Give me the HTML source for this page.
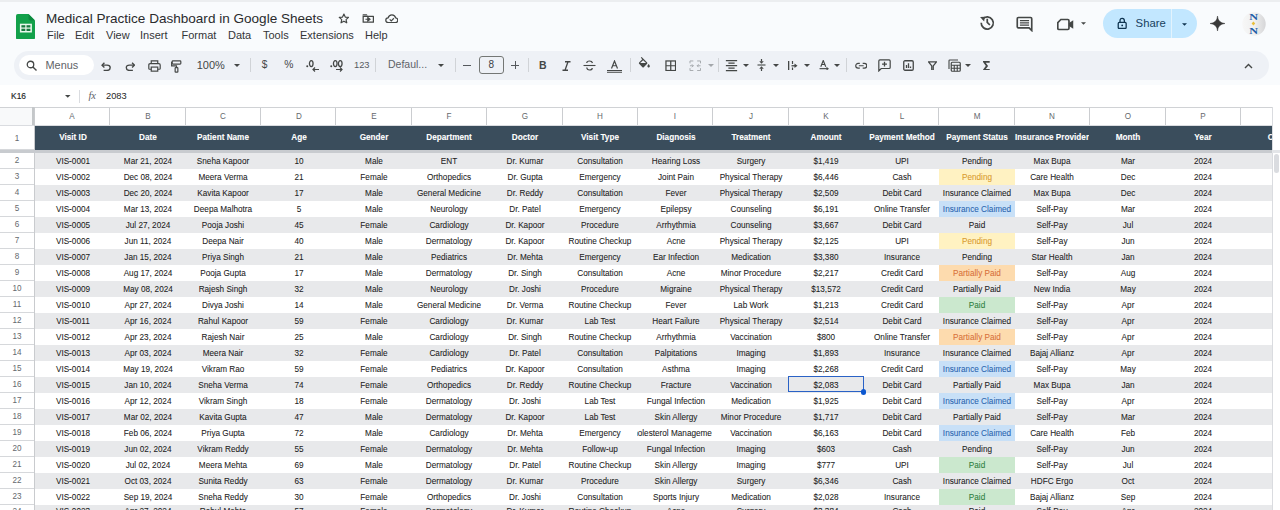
<!DOCTYPE html>
<html><head><meta charset="utf-8"><title>Medical Practice Dashboard in Google Sheets</title>
<style>
*{margin:0;padding:0;box-sizing:border-box}
html,body{width:1280px;height:510px;overflow:hidden;background:#fff;font-family:"Liberation Sans",sans-serif}
.a{position:absolute}
.t{position:absolute;white-space:nowrap;line-height:1}
.ic{position:absolute;display:block}
.cell{position:absolute;overflow:hidden;height:16px}
.cell span{position:absolute;left:calc(50% + 0.8px);transform:translateX(-50%) scaleX(0.91);white-space:nowrap;font-size:9px;line-height:16px;top:0.1px;color:#1c1c1c;-webkit-text-stroke:0.07px currentColor}
.hd span{color:#fff;font-weight:bold;line-height:24px;top:-0.2px;-webkit-text-stroke:0.1px #fff}
.ch{position:absolute;top:107px;height:18px;overflow:hidden}
.ch span{position:absolute;left:calc(50% + 0.6px);transform:translateX(-50%) scaleX(0.9);white-space:nowrap;font-size:9px;line-height:18px;top:0.2px;color:#65696d}
.rh{position:absolute;left:0;width:34px;border-bottom:1px solid #d6d8db}
.rh span{position:absolute;left:calc(50% + 0.3px);transform:translateX(-50%) scaleX(0.9);white-space:nowrap;font-size:9px;line-height:16px;top:0.3px;color:#65696d}
#grid{position:absolute;left:0;top:107px;width:1272px;height:403px;overflow:hidden;background:#fff}
#grid .g{position:absolute;left:0;top:-107px;width:1280px;height:510px}
</style></head><body>

<div class="a" style="left:0;top:0;width:1280px;height:107px;background:#f9fbfd"></div>
<div class="a" style="left:0;top:0;width:1280px;height:1.5px;background:#eceef0"></div>
<svg class="ic" style="left:16px;top:13.5px" width="19" height="25.6" viewBox="0 0 19 25.6">
<path d="M1.8 0H12.5L19 6.5V23.8Q19 25.6 17.2 25.6H1.8Q0 25.6 0 23.8V1.8Q0 0 1.8 0Z" fill="#12a04a"/>
<path d="M12.5 0L19 6.5H14.3Q12.5 6.5 12.5 4.7Z" fill="#0c8a3e"/>
<rect x="3.9" y="9.7" width="12" height="8.8" fill="#e9f8ec"/>
<rect x="5.4" y="11.2" width="3.9" height="2.3" fill="#17793f"/><rect x="10.5" y="11.2" width="3.9" height="2.3" fill="#17793f"/>
<rect x="5.4" y="14.7" width="3.9" height="2.3" fill="#17793f"/><rect x="10.5" y="14.7" width="3.9" height="2.3" fill="#17793f"/>
</svg>
<div class="t" style="left:46px;top:11.8px;font-size:13.55px;color:#2a2b2d">Medical Practice Dashboard in Google Sheets</div>
<svg class="ic" style="left:337.5px;top:12.8px" width="11.8" height="11.5" viewBox="0 0 24 23.4"><path d="M12 2.2l2.75 6.1 6.65.65-5 4.45 1.45 6.55L12 16.6l-5.85 3.35 1.45-6.55-5-4.45 6.65-.65z" fill="none" stroke="#444746" stroke-width="2.4" stroke-linejoin="round"/></svg>
<svg class="ic" style="left:361.5px;top:14.3px" width="12.6" height="9.4" viewBox="0 0 24 18"><path d="M2.2 3.2V15.8H21.8V4.6H2.2" fill="none" stroke="#444746" stroke-width="2.4" stroke-linejoin="round"/><path d="M1 1.5Q1 0.5 2 0.5H9L11 3H1Z" fill="#444746"/><path d="M6.5 10.2H12M11 6.5L15.5 10.2L11 13.9Z" fill="#444746" stroke="#444746" stroke-width="2"/></svg>
<svg class="ic" style="left:384.6px;top:14px" width="13.6" height="9.4" viewBox="0 0 26 18"><path d="M6.5 16.5Q1.5 16.5 1.5 12Q1.5 8 5.8 7.6Q7.5 1.5 13.2 1.5Q19 1.5 20.3 7.6Q24.5 8 24.5 12Q24.5 16.5 20 16.5Z" fill="none" stroke="#444746" stroke-width="2.4" stroke-linejoin="round"/><path d="M9 10.2l3 3 5-5" fill="none" stroke="#444746" stroke-width="2.2"/></svg>
<div class="t" style="left:47px;top:29.7px;font-size:11px;color:#333538">File</div>
<div class="t" style="left:75px;top:29.7px;font-size:11px;color:#333538">Edit</div>
<div class="t" style="left:106px;top:29.7px;font-size:11px;color:#333538">View</div>
<div class="t" style="left:140px;top:29.7px;font-size:11px;color:#333538">Insert</div>
<div class="t" style="left:181.5px;top:29.7px;font-size:11px;color:#333538">Format</div>
<div class="t" style="left:228px;top:29.7px;font-size:11px;color:#333538">Data</div>
<div class="t" style="left:263px;top:29.7px;font-size:11px;color:#333538">Tools</div>
<div class="t" style="left:300px;top:29.7px;font-size:11px;color:#333538">Extensions</div>
<div class="t" style="left:365px;top:29.7px;font-size:11px;color:#333538">Help</div>
<svg class="ic" style="left:978.8px;top:14.3px" width="16.5" height="16.5" viewBox="0 0 24 24"><path d="M5.2 7.5A8.8 8.8 0 1 1 3.2 12.8" fill="none" stroke="#444746" stroke-width="2.5"/><path d="M1.5 4.5L8.5 4L7.5 11Z" fill="#444746"/><path d="M12 7V12.3L15.8 16" fill="none" stroke="#444746" stroke-width="2.5"/></svg>
<svg class="ic" style="left:1016px;top:16px" width="17" height="16" viewBox="0 0 22 21"><path d="M3 2H19Q20.5 2 20.5 3.5V19L17 15.5H3Q1.5 15.5 1.5 14V3.5Q1.5 2 3 2Z" fill="none" stroke="#444746" stroke-width="2.2"/><path d="M5 6h12M5 9h12M5 12h12" stroke="#444746" stroke-width="1.6"/></svg>
<svg class="ic" style="left:1057px;top:18px" width="17" height="13" viewBox="0 0 22 16"><path d="M5 1.5H14Q15.5 1.5 15.5 3V13Q15.5 14.5 14 14.5H2.5Q1 14.5 1 13V5.5Z" fill="none" stroke="#444746" stroke-width="2.2"/><path d="M15.5 6L21 2.5V13.5L15.5 10Z" fill="#444746"/></svg>
<svg class="ic" style="left:1081px;top:22px" width="5" height="3" viewBox="0 0 10 5"><path d="M0 0h10L5 5z" fill="#444746"/></svg>
<div class="a" style="left:1103px;top:8.7px;width:94px;height:29.6px;border-radius:15px;background:#c2e7ff"></div>
<div class="a" style="left:1171.3px;top:8.7px;width:1px;height:29.6px;background:#e3f3fd"></div>
<svg class="ic" style="left:1117.3px;top:16.8px" width="10.4" height="12.4" viewBox="0 0 11 13"><path d="M3.2 5.6V3.9Q3.2 1.3 5.5 1.3Q7.8 1.3 7.8 3.9V5.6" fill="none" stroke="#0f3450" stroke-width="1.35"/><rect x="1.3" y="5.6" width="8.4" height="6.5" rx="1.1" fill="none" stroke="#0f3450" stroke-width="1.35"/><circle cx="5.5" cy="8.85" r="0.95" fill="#0f3450"/></svg>
<div class="t" style="left:1135.6px;top:18.4px;font-size:11.3px;color:#173f5e">Share</div>
<svg class="ic" style="left:1182.2px;top:23.3px" width="5" height="2.8" viewBox="0 0 10 5"><path d="M0 0h10L5 5z" fill="#0f3450"/></svg>
<svg class="ic" style="left:1210.3px;top:16.1px" width="15" height="15" viewBox="0 0 24 24"><path d="M12 0Q12.8 11.2 24 12Q12.8 12.8 12 24Q11.2 12.8 0 12Q11.2 11.2 12 0Z" fill="#3a3a3a" stroke="#3a3a3a" stroke-width="0.8" stroke-linejoin="round"/></svg>
<svg class="ic" style="left:1242px;top:12.2px" width="24" height="24" viewBox="0 0 24 24"><defs><linearGradient id="av" x1="0" y1="0" x2="1" y2="0"><stop offset="0" stop-color="#f7f7f7"/><stop offset="0.5" stop-color="#f0f0f0"/><stop offset="1" stop-color="#d6d6d8"/></linearGradient></defs><circle cx="12" cy="12" r="11.7" fill="url(#av)"/>
<g transform="translate(7.2,8.2) scale(1.45,1)"><text x="0" y="0" font-family="Liberation Serif" font-weight="bold" font-size="8.4" fill="#1f5ca8">N</text></g>
<path d="M11.4 9.6L13.2 11.6L11.4 13.6L9.6 11.6Z" fill="#e9bf3a"/>
<g transform="translate(7.2,22) scale(1.45,1)"><text x="0" y="0" font-family="Liberation Serif" font-weight="bold" font-size="8.4" fill="#1f5ca8">N</text></g></svg>
<div class="a" style="left:14px;top:50.5px;width:1255px;height:29px;border-radius:14.5px;background:#eef1f6"></div>
<div class="a" style="left:18.7px;top:54.7px;width:75px;height:20px;border-radius:10px;background:#fff"></div>
<svg class="ic" style="left:26px;top:60px" width="12" height="11" viewBox="0 0 24 22"><circle cx="9" cy="9" r="6.5" fill="none" stroke="#444746" stroke-width="2.6"/><path d="M13.8 13.8L21 21" stroke="#444746" stroke-width="2.8"/></svg>
<div class="t" style="left:45.5px;top:60.2px;font-size:10.9px;color:#5f6368">Menus</div>
<svg class="ic" style="left:101.2px;top:61.5px" width="10.5" height="9.5" viewBox="0 0 20 18"><path d="M6.5 1.5L2 6l4.5 4.5" fill="none" stroke="#444746" stroke-width="2.6"/><path d="M2.5 6H11.5Q17.5 6 17.5 11Q17.5 16 11.5 16H5" fill="none" stroke="#444746" stroke-width="2.6"/></svg>
<svg class="ic" style="left:124.8px;top:61.5px" width="10.5" height="9.5" viewBox="0 0 20 18"><path d="M13.5 1.5L18 6l-4.5 4.5" fill="none" stroke="#444746" stroke-width="2.6"/><path d="M17.5 6H8.5Q2.5 6 2.5 11Q2.5 16 8.5 16H15" fill="none" stroke="#444746" stroke-width="2.6"/></svg>
<svg class="ic" style="left:147.5px;top:59.5px" width="13" height="12" viewBox="0 0 24 22"><path d="M6 6V1.5H18V6" fill="none" stroke="#444746" stroke-width="2.2"/><path d="M6 17H3Q1.5 17 1.5 15.5V9Q1.5 6.5 4 6.5H20Q22.5 6.5 22.5 9V15.5Q22.5 17 21 17H18" fill="none" stroke="#444746" stroke-width="2.2"/><rect x="6" y="13" width="12" height="7.5" fill="none" stroke="#444746" stroke-width="2.2"/></svg>
<svg class="ic" style="left:171px;top:59.5px" width="11" height="13" viewBox="0 0 20 24"><rect x="2" y="1.5" width="16" height="6" rx="1.5" fill="none" stroke="#444746" stroke-width="2.2"/><path d="M2 4.5H1V11H10V14" fill="none" stroke="#444746" stroke-width="2.2"/><rect x="7.5" y="14" width="5" height="8.5" rx="1" fill="none" stroke="#444746" stroke-width="2.2"/></svg>
<div class="t" style="left:196.7px;top:60.4px;font-size:11px;color:#444746">100%</div>
<svg class="ic" style="left:234px;top:63.5px" width="6" height="3" viewBox="0 0 10 5"><path d="M0 0h10L5 5z" fill="#444746"/></svg>
<div class="a" style="left:250px;top:58px;width:1px;height:14px;background:#d0d3d7"></div>
<div class="t" style="left:261.8px;top:59.6px;font-size:10.2px;color:#444746">$</div>
<div class="t" style="left:284.2px;top:59.8px;font-size:10.3px;color:#444746">%</div>
<svg class="ic" style="left:305.5px;top:59px" width="14" height="13" viewBox="0 0 28 26"><circle cx="2.5" cy="14.5" r="2" fill="#444746"/><ellipse cx="10.5" cy="9.2" rx="3.6" ry="6" fill="none" stroke="#444746" stroke-width="2.6"/><path d="M26 21H14M18 17l-4 4 4 4" fill="none" stroke="#444746" stroke-width="2.4"/></svg>
<svg class="ic" style="left:329.5px;top:59px" width="15" height="13" viewBox="0 0 30 26"><circle cx="2.5" cy="14.5" r="2" fill="#444746"/><ellipse cx="10.5" cy="9.2" rx="3.6" ry="6" fill="none" stroke="#444746" stroke-width="2.6"/><ellipse cx="20.5" cy="9.2" rx="3.6" ry="6" fill="none" stroke="#444746" stroke-width="2.6"/><path d="M12 21H24M20 17l4 4-4 4" fill="none" stroke="#444746" stroke-width="2.4"/></svg>
<div class="t" style="left:354px;top:61px;font-size:9.3px;color:#555a5e">123</div>
<div class="a" style="left:375px;top:58px;width:1px;height:14px;background:#d0d3d7"></div>
<div class="t" style="left:388px;top:59px;font-size:10.5px;color:#5f6368">Defaul...</div>
<svg class="ic" style="left:438px;top:63.5px" width="6" height="3" viewBox="0 0 10 5"><path d="M0 0h10L5 5z" fill="#444746"/></svg>
<div class="a" style="left:455px;top:58px;width:1px;height:14px;background:#d0d3d7"></div>
<div class="a" style="left:463.4px;top:64.5px;width:7.6px;height:1.3px;background:#55595d"></div>
<div class="a" style="left:479px;top:56.2px;width:25px;height:18px;border:1px solid #747775;border-radius:3px"></div>
<div class="t" style="left:488.6px;top:60.2px;font-size:10px;color:#3c4043">8</div>
<div class="a" style="left:511.4px;top:64.5px;width:7.6px;height:1.3px;background:#55595d"></div>
<div class="a" style="left:514.6px;top:61.3px;width:1.3px;height:7.6px;background:#55595d"></div>
<div class="a" style="left:527.6px;top:58px;width:1px;height:14px;background:#d0d3d7"></div>
<div class="t" style="left:539px;top:60px;font-size:10.5px;font-weight:bold;color:#444746">B</div>
<svg class="ic" style="left:561.5px;top:60.5px" width="9" height="10" viewBox="0 0 18 20"><path d="M6 1.5h11M1 18.5h11M12 1.5L6 18.5" fill="none" stroke="#444746" stroke-width="2.6"/></svg>
<svg class="ic" style="left:583px;top:59.5px" width="13" height="11" viewBox="0 0 26 22"><path d="M1 11H25" stroke="#444746" stroke-width="2.2"/><path d="M19 6Q18 2 13 2Q7.5 2 7.5 6" fill="none" stroke="#444746" stroke-width="2.4"/><path d="M7.5 15Q8 20 13 20Q18.5 20 18.5 16" fill="none" stroke="#444746" stroke-width="2.4"/></svg>
<svg class="ic" style="left:606px;top:59.5px" width="17" height="13" viewBox="0 0 34 26"><path d="M11 17L17 2L23 17M13.5 11.5h7" fill="none" stroke="#444746" stroke-width="2.4"/><path d="M2 21H32M2 24.5H32" stroke="#444746" stroke-width="2"/></svg>
<div class="a" style="left:629.6px;top:58px;width:1px;height:14px;background:#d0d3d7"></div>
<svg class="ic" style="left:637.2px;top:56.8px" width="14.7" height="14.7" viewBox="0 0 24 24"><path d="M16.56 8.94L7.62 0 6.21 1.41l2.38 2.38-5.15 5.15c-.59.59-.59 1.54 0 2.12l5.5 5.5c.29.29.68.44 1.06.44s.77-.15 1.06-.44l5.5-5.5c.59-.58.59-1.53 0-2.12zM5.21 10L10 5.21 14.79 10H5.21zM19 11.5s-2 2.17-2 3.5c0 1.1.9 2 2 2s2-.9 2-2c0-1.33-2-3.5-2-3.5z" fill="#444746"/></svg>
<svg class="ic" style="left:664.5px;top:59.5px" width="11.5" height="11.5" viewBox="0 0 24 24"><rect x="2" y="2" width="20" height="20" fill="none" stroke="#444746" stroke-width="2.6"/><path d="M12 2V22M2 12H22" stroke="#444746" stroke-width="2.6"/></svg>
<svg class="ic" style="left:688.5px;top:59.5px" width="12.5" height="11.5" viewBox="0 0 26 24"><path d="M2 7V2H9M17 2H24V7M2 17V22H9M17 22H24V17M2 12H9M17 12H24M6 9l3 3-3 3M20 9l-3 3 3 3" fill="none" stroke="#a3a7ab" stroke-width="2"/></svg>
<svg class="ic" style="left:707.5px;top:63.5px" width="6" height="3" viewBox="0 0 10 5"><path d="M0 0h10L5 5z" fill="#a3a7ab"/></svg>
<div class="a" style="left:718px;top:58px;width:1px;height:14px;background:#d0d3d7"></div>
<svg class="ic" style="left:724.1px;top:57.9px" width="15" height="15" viewBox="0 0 24 24"><path d="M7 15v2h10v-2H7zm-4 6h18v-2H3v2zm0-8h18v-2H3v2zm4-6v2h10V7H7zM3 3v2h18V3H3z" fill="#444746"/></svg>
<svg class="ic" style="left:742.5px;top:63.5px" width="6" height="3" viewBox="0 0 10 5"><path d="M0 0h10L5 5z" fill="#444746"/></svg>
<svg class="ic" style="left:757.2px;top:59.3px" width="9" height="12" viewBox="0 0 18 24"><path d="M1 12H17" stroke="#444746" stroke-width="2.2"/><path d="M9 0V5" stroke="#444746" stroke-width="2.4"/><path d="M4.5 4.5H13.5L9 9.5Z" fill="#444746"/><path d="M9 24V19" stroke="#444746" stroke-width="2.4"/><path d="M4.5 19.5H13.5L9 14.5Z" fill="#444746"/></svg>
<svg class="ic" style="left:773px;top:63.5px" width="6" height="3" viewBox="0 0 10 5"><path d="M0 0h10L5 5z" fill="#444746"/></svg>
<svg class="ic" style="left:787.6px;top:60.8px" width="10" height="9.6" viewBox="0 0 20 19"><path d="M1.3 0V19" stroke="#444746" stroke-width="2.6"/><path d="M9 0V6M9 13V19" stroke="#444746" stroke-width="2.4"/><path d="M7 9.5H14" stroke="#444746" stroke-width="2.6"/><path d="M13 5L19 9.5L13 14Z" fill="#444746"/></svg>
<svg class="ic" style="left:803.5px;top:63.5px" width="6" height="3" viewBox="0 0 10 5"><path d="M0 0h10L5 5z" fill="#444746"/></svg>
<svg class="ic" style="left:818.8px;top:59.8px" width="10" height="10.4" viewBox="0 0 20 21"><path d="M3.5 13.5L8.5 1L13.5 13.5M5.3 9H11.7" fill="none" stroke="#444746" stroke-width="2.3"/><path d="M1 17.5H16" stroke="#444746" stroke-width="2.3"/><path d="M15 13.5L20 17.5L15 21.5Z" fill="#444746"/></svg>
<svg class="ic" style="left:833.5px;top:63.5px" width="6" height="3" viewBox="0 0 10 5"><path d="M0 0h10L5 5z" fill="#444746"/></svg>
<div class="a" style="left:846px;top:58px;width:1px;height:14px;background:#d0d3d7"></div>
<svg class="ic" style="left:854.5px;top:61.5px" width="12.5" height="7.5" viewBox="0 0 26 14"><path d="M10 2H6.5A5 5 0 0 0 6.5 12H10M16 2H19.5A5 5 0 0 1 19.5 12H16M8 7H18" fill="none" stroke="#444746" stroke-width="2.4"/></svg>
<svg class="ic" style="left:877.5px;top:59px" width="13" height="12.5" viewBox="0 0 24 23"><path d="M3.5 1.5H20.5Q22.5 1.5 22.5 3.5V15.5Q22.5 17.5 20.5 17.5H6L1.5 22V3.5Q1.5 1.5 3.5 1.5Z" fill="none" stroke="#444746" stroke-width="2.2"/><path d="M12 5V14M7.5 9.5H16.5" stroke="#444746" stroke-width="2.4"/></svg>
<svg class="ic" style="left:903.2px;top:60px" width="11" height="11" viewBox="0 0 22 22"><rect x="1.5" y="1.5" width="19" height="19" rx="2.5" fill="none" stroke="#444746" stroke-width="2.6"/><path d="M7 10V16M11 6.5V16M15 13V16" stroke="#444746" stroke-width="2.6"/></svg>
<svg class="ic" style="left:927.6px;top:60.6px" width="9" height="9.6" viewBox="0 0 18 19"><path d="M1 1.5H17L10.5 9.5V18.5H7.5V9.5Z" fill="none" stroke="#444746" stroke-width="2.5" stroke-linejoin="round"/></svg>
<svg class="ic" style="left:947.5px;top:58.5px" width="13" height="13" viewBox="0 0 26 26"><path d="M2 20V3.5Q2 2 3.5 2H20" fill="none" stroke="#444746" stroke-width="2.2"/><rect x="6.5" y="6.5" width="18" height="18" rx="2" fill="none" stroke="#444746" stroke-width="2.4"/><path d="M6.5 12.5H24.5M6.5 18.5H24.5M12.5 12.5V24.5M18.5 12.5V24.5" stroke="#444746" stroke-width="2.2"/></svg>
<svg class="ic" style="left:965px;top:63.5px" width="6" height="3" viewBox="0 0 10 5"><path d="M0 0h10L5 5z" fill="#444746"/></svg>
<svg class="ic" style="left:983.4px;top:60.6px" width="7" height="9.8" viewBox="0 0 14 20"><path d="M13.5 2H2L8 10L2 18H13.5" fill="none" stroke="#444746" stroke-width="3.6" stroke-linejoin="miter"/></svg>
<svg class="ic" style="left:1243.5px;top:62.5px" width="9" height="6" viewBox="0 0 18 12"><path d="M2 10L9 3L16 10" fill="none" stroke="#444746" stroke-width="2.8"/></svg>
<div class="a" style="left:0;top:85px;width:1280px;height:22.5px;background:#fff"></div>
<div class="t" style="left:10.8px;top:91.3px;font-size:9.4px;color:#1f1f1f;transform:scaleX(0.9);transform-origin:left;-webkit-text-stroke:0.15px #1f1f1f">K16</div>
<svg class="ic" style="left:65px;top:95px" width="5.5" height="2.8" viewBox="0 0 10 5"><path d="M0 0h10L5 5z" fill="#444746"/></svg>
<div class="a" style="left:79px;top:90px;width:1px;height:13px;background:#dadce0"></div>
<div class="t" style="left:88.4px;top:91.2px;font-size:10.5px;font-style:italic;font-family:'Liberation Serif',serif;color:#5f6368">fx</div>
<div class="t" style="left:106px;top:91.7px;font-size:9.3px;color:#1f1f1f">2083</div>
<div id="grid"><div class="g">
<div class="a" style="left:0;top:107px;width:1272px;height:1px;background:#d0d2d5"></div>
<div class="a" style="left:0;top:108px;width:31.5px;height:17px;background:#f8f9fa"></div>
<div class="ch" style="left:34.10px;width:75.375px"><span>A</span></div>
<div class="ch" style="left:109.47px;width:75.375px"><span>B</span></div>
<div class="a" style="left:109px;top:108px;width:1px;height:17px;background:#cbcdd0"></div>
<div class="ch" style="left:184.85px;width:75.375px"><span>C</span></div>
<div class="a" style="left:185px;top:108px;width:1px;height:17px;background:#cbcdd0"></div>
<div class="ch" style="left:260.23px;width:75.375px"><span>D</span></div>
<div class="a" style="left:260px;top:108px;width:1px;height:17px;background:#cbcdd0"></div>
<div class="ch" style="left:335.60px;width:75.375px"><span>E</span></div>
<div class="a" style="left:335px;top:108px;width:1px;height:17px;background:#cbcdd0"></div>
<div class="ch" style="left:410.98px;width:75.375px"><span>F</span></div>
<div class="a" style="left:411px;top:108px;width:1px;height:17px;background:#cbcdd0"></div>
<div class="ch" style="left:486.35px;width:75.375px"><span>G</span></div>
<div class="a" style="left:486px;top:108px;width:1px;height:17px;background:#cbcdd0"></div>
<div class="ch" style="left:561.73px;width:75.375px"><span>H</span></div>
<div class="a" style="left:562px;top:108px;width:1px;height:17px;background:#cbcdd0"></div>
<div class="ch" style="left:637.10px;width:75.375px"><span>I</span></div>
<div class="a" style="left:637px;top:108px;width:1px;height:17px;background:#cbcdd0"></div>
<div class="ch" style="left:712.48px;width:75.375px"><span>J</span></div>
<div class="a" style="left:712px;top:108px;width:1px;height:17px;background:#cbcdd0"></div>
<div class="ch" style="left:787.85px;width:75.375px"><span>K</span></div>
<div class="a" style="left:788px;top:108px;width:1px;height:17px;background:#cbcdd0"></div>
<div class="ch" style="left:863.23px;width:75.375px"><span>L</span></div>
<div class="a" style="left:863px;top:108px;width:1px;height:17px;background:#cbcdd0"></div>
<div class="ch" style="left:938.60px;width:75.375px"><span>M</span></div>
<div class="a" style="left:938px;top:108px;width:1px;height:17px;background:#cbcdd0"></div>
<div class="ch" style="left:1013.98px;width:75.375px"><span>N</span></div>
<div class="a" style="left:1014px;top:108px;width:1px;height:17px;background:#cbcdd0"></div>
<div class="ch" style="left:1089.35px;width:75.375px"><span>O</span></div>
<div class="a" style="left:1089px;top:108px;width:1px;height:17px;background:#cbcdd0"></div>
<div class="ch" style="left:1164.72px;width:75.375px"><span>P</span></div>
<div class="a" style="left:1165px;top:108px;width:1px;height:17px;background:#cbcdd0"></div>
<div class="ch" style="left:1240.10px;width:75.375px"><span>Q</span></div>
<div class="a" style="left:1240px;top:108px;width:1px;height:17px;background:#cbcdd0"></div>
<div class="a" style="left:0;top:125px;width:1272px;height:1px;background:#dadce0"></div>
<div class="a" style="left:31.5px;top:107px;width:2.6px;height:18px;background:#c4c7c9"></div>
<div class="a" style="left:33.7px;top:107px;width:1px;height:403px;background:#c9cbce"></div>
<div class="a" style="left:34.7px;top:125.5px;width:1237.9px;height:24.0px;background:#3a4d5c"></div>
<div class="cell hd" style="left:34.10px;top:125.5px;width:75.375px;height:24px"><span>Visit ID</span></div>
<div class="cell hd" style="left:109.47px;top:125.5px;width:75.375px;height:24px"><span>Date</span></div>
<div class="cell hd" style="left:184.85px;top:125.5px;width:75.375px;height:24px"><span>Patient Name</span></div>
<div class="cell hd" style="left:260.23px;top:125.5px;width:75.375px;height:24px"><span>Age</span></div>
<div class="cell hd" style="left:335.60px;top:125.5px;width:75.375px;height:24px"><span>Gender</span></div>
<div class="cell hd" style="left:410.98px;top:125.5px;width:75.375px;height:24px"><span>Department</span></div>
<div class="cell hd" style="left:486.35px;top:125.5px;width:75.375px;height:24px"><span>Doctor</span></div>
<div class="cell hd" style="left:561.73px;top:125.5px;width:75.375px;height:24px"><span>Visit Type</span></div>
<div class="cell hd" style="left:637.10px;top:125.5px;width:75.375px;height:24px"><span>Diagnosis</span></div>
<div class="cell hd" style="left:712.48px;top:125.5px;width:75.375px;height:24px"><span>Treatment</span></div>
<div class="cell hd" style="left:787.85px;top:125.5px;width:75.375px;height:24px"><span>Amount</span></div>
<div class="cell hd" style="left:863.23px;top:125.5px;width:75.375px;height:24px"><span>Payment Method</span></div>
<div class="cell hd" style="left:938.60px;top:125.5px;width:75.375px;height:24px"><span>Payment Status</span></div>
<div class="cell hd" style="left:1013.98px;top:125.5px;width:75.375px;height:24px"><span>Insurance Provider</span></div>
<div class="cell hd" style="left:1089.35px;top:125.5px;width:75.375px;height:24px"><span>Month</span></div>
<div class="cell hd" style="left:1164.72px;top:125.5px;width:75.375px;height:24px"><span>Year</span></div>
<div class="cell hd" style="left:1240.10px;top:125.5px;width:75.375px;height:24px"><span>Clinic</span></div>
<div class="rh" style="top:125px;height:24.5px"><span style="top:4.5px">1</span></div>
<div class="a" style="left:0;top:149.5px;width:1280px;height:3px;background:#c8cbcf"></div>
<div class="a" style="left:34.7px;top:152.5px;width:1237.3000000000002px;height:16px;background:#e8e9eb"></div>
<div class="rh" style="top:152.5px;height:16px"><span style="top:-0.4px">2</span></div>
<div class="cell" style="left:34.10px;top:152.5px;width:75.375px"><span>VIS-0001</span></div>
<div class="cell" style="left:109.47px;top:152.5px;width:75.375px"><span>Mar 21, 2024</span></div>
<div class="cell" style="left:184.85px;top:152.5px;width:75.375px"><span>Sneha Kapoor</span></div>
<div class="cell" style="left:260.23px;top:152.5px;width:75.375px"><span>10</span></div>
<div class="cell" style="left:335.60px;top:152.5px;width:75.375px"><span>Male</span></div>
<div class="cell" style="left:410.98px;top:152.5px;width:75.375px"><span>ENT</span></div>
<div class="cell" style="left:486.35px;top:152.5px;width:75.375px"><span>Dr. Kumar</span></div>
<div class="cell" style="left:561.73px;top:152.5px;width:75.375px"><span>Consultation</span></div>
<div class="cell" style="left:637.10px;top:152.5px;width:75.375px"><span>Hearing Loss</span></div>
<div class="cell" style="left:712.48px;top:152.5px;width:75.375px"><span>Surgery</span></div>
<div class="cell" style="left:787.85px;top:152.5px;width:75.375px"><span>$1,419</span></div>
<div class="cell" style="left:863.23px;top:152.5px;width:75.375px"><span>UPI</span></div>
<div class="cell" style="left:938.60px;top:152.5px;width:75.375px"><span>Pending</span></div>
<div class="cell" style="left:1013.98px;top:152.5px;width:75.375px"><span>Max Bupa</span></div>
<div class="cell" style="left:1089.35px;top:152.5px;width:75.375px"><span>Mar</span></div>
<div class="cell" style="left:1164.72px;top:152.5px;width:75.375px"><span>2024</span></div>
<div class="rh" style="top:168.5px;height:16px"><span style="top:-0.4px">3</span></div>
<div class="cell" style="left:34.10px;top:168.5px;width:75.375px"><span>VIS-0002</span></div>
<div class="cell" style="left:109.47px;top:168.5px;width:75.375px"><span>Dec 08, 2024</span></div>
<div class="cell" style="left:184.85px;top:168.5px;width:75.375px"><span>Meera Verma</span></div>
<div class="cell" style="left:260.23px;top:168.5px;width:75.375px"><span>21</span></div>
<div class="cell" style="left:335.60px;top:168.5px;width:75.375px"><span>Female</span></div>
<div class="cell" style="left:410.98px;top:168.5px;width:75.375px"><span>Orthopedics</span></div>
<div class="cell" style="left:486.35px;top:168.5px;width:75.375px"><span>Dr. Gupta</span></div>
<div class="cell" style="left:561.73px;top:168.5px;width:75.375px"><span>Emergency</span></div>
<div class="cell" style="left:637.10px;top:168.5px;width:75.375px"><span>Joint Pain</span></div>
<div class="cell" style="left:712.48px;top:168.5px;width:75.375px"><span>Physical Therapy</span></div>
<div class="cell" style="left:787.85px;top:168.5px;width:75.375px"><span>$6,446</span></div>
<div class="cell" style="left:863.23px;top:168.5px;width:75.375px"><span>Cash</span></div>
<div class="a" style="left:939.00px;top:168.5px;width:75.575px;height:16px;background:#fff2c2"></div>
<div class="cell" style="left:938.60px;top:168.5px;width:75.375px"><span style="color:#d99a2e">Pending</span></div>
<div class="cell" style="left:1013.98px;top:168.5px;width:75.375px"><span>Care Health</span></div>
<div class="cell" style="left:1089.35px;top:168.5px;width:75.375px"><span>Dec</span></div>
<div class="cell" style="left:1164.72px;top:168.5px;width:75.375px"><span>2024</span></div>
<div class="a" style="left:34.7px;top:184.5px;width:1237.3000000000002px;height:16px;background:#e8e9eb"></div>
<div class="rh" style="top:184.5px;height:16px"><span style="top:-0.4px">4</span></div>
<div class="cell" style="left:34.10px;top:184.5px;width:75.375px"><span>VIS-0003</span></div>
<div class="cell" style="left:109.47px;top:184.5px;width:75.375px"><span>Dec 20, 2024</span></div>
<div class="cell" style="left:184.85px;top:184.5px;width:75.375px"><span>Kavita Kapoor</span></div>
<div class="cell" style="left:260.23px;top:184.5px;width:75.375px"><span>17</span></div>
<div class="cell" style="left:335.60px;top:184.5px;width:75.375px"><span>Male</span></div>
<div class="cell" style="left:410.98px;top:184.5px;width:75.375px"><span>General Medicine</span></div>
<div class="cell" style="left:486.35px;top:184.5px;width:75.375px"><span>Dr. Reddy</span></div>
<div class="cell" style="left:561.73px;top:184.5px;width:75.375px"><span>Consultation</span></div>
<div class="cell" style="left:637.10px;top:184.5px;width:75.375px"><span>Fever</span></div>
<div class="cell" style="left:712.48px;top:184.5px;width:75.375px"><span>Physical Therapy</span></div>
<div class="cell" style="left:787.85px;top:184.5px;width:75.375px"><span>$2,509</span></div>
<div class="cell" style="left:863.23px;top:184.5px;width:75.375px"><span>Debit Card</span></div>
<div class="cell" style="left:938.60px;top:184.5px;width:75.375px"><span>Insurance Claimed</span></div>
<div class="cell" style="left:1013.98px;top:184.5px;width:75.375px"><span>Max Bupa</span></div>
<div class="cell" style="left:1089.35px;top:184.5px;width:75.375px"><span>Dec</span></div>
<div class="cell" style="left:1164.72px;top:184.5px;width:75.375px"><span>2024</span></div>
<div class="rh" style="top:200.5px;height:16px"><span style="top:-0.4px">5</span></div>
<div class="cell" style="left:34.10px;top:200.5px;width:75.375px"><span>VIS-0004</span></div>
<div class="cell" style="left:109.47px;top:200.5px;width:75.375px"><span>Mar 13, 2024</span></div>
<div class="cell" style="left:184.85px;top:200.5px;width:75.375px"><span>Deepa Malhotra</span></div>
<div class="cell" style="left:260.23px;top:200.5px;width:75.375px"><span>5</span></div>
<div class="cell" style="left:335.60px;top:200.5px;width:75.375px"><span>Male</span></div>
<div class="cell" style="left:410.98px;top:200.5px;width:75.375px"><span>Neurology</span></div>
<div class="cell" style="left:486.35px;top:200.5px;width:75.375px"><span>Dr. Patel</span></div>
<div class="cell" style="left:561.73px;top:200.5px;width:75.375px"><span>Emergency</span></div>
<div class="cell" style="left:637.10px;top:200.5px;width:75.375px"><span>Epilepsy</span></div>
<div class="cell" style="left:712.48px;top:200.5px;width:75.375px"><span>Counseling</span></div>
<div class="cell" style="left:787.85px;top:200.5px;width:75.375px"><span>$6,191</span></div>
<div class="cell" style="left:863.23px;top:200.5px;width:75.375px"><span>Online Transfer</span></div>
<div class="a" style="left:939.00px;top:200.5px;width:75.575px;height:16px;background:#c8e0f7"></div>
<div class="cell" style="left:938.60px;top:200.5px;width:75.375px"><span style="color:#2a65b0">Insurance Claimed</span></div>
<div class="cell" style="left:1013.98px;top:200.5px;width:75.375px"><span>Self-Pay</span></div>
<div class="cell" style="left:1089.35px;top:200.5px;width:75.375px"><span>Mar</span></div>
<div class="cell" style="left:1164.72px;top:200.5px;width:75.375px"><span>2024</span></div>
<div class="a" style="left:34.7px;top:216.5px;width:1237.3000000000002px;height:16px;background:#e8e9eb"></div>
<div class="rh" style="top:216.5px;height:16px"><span style="top:-0.4px">6</span></div>
<div class="cell" style="left:34.10px;top:216.5px;width:75.375px"><span>VIS-0005</span></div>
<div class="cell" style="left:109.47px;top:216.5px;width:75.375px"><span>Jul 27, 2024</span></div>
<div class="cell" style="left:184.85px;top:216.5px;width:75.375px"><span>Pooja Joshi</span></div>
<div class="cell" style="left:260.23px;top:216.5px;width:75.375px"><span>45</span></div>
<div class="cell" style="left:335.60px;top:216.5px;width:75.375px"><span>Female</span></div>
<div class="cell" style="left:410.98px;top:216.5px;width:75.375px"><span>Cardiology</span></div>
<div class="cell" style="left:486.35px;top:216.5px;width:75.375px"><span>Dr. Kapoor</span></div>
<div class="cell" style="left:561.73px;top:216.5px;width:75.375px"><span>Procedure</span></div>
<div class="cell" style="left:637.10px;top:216.5px;width:75.375px"><span>Arrhythmia</span></div>
<div class="cell" style="left:712.48px;top:216.5px;width:75.375px"><span>Counseling</span></div>
<div class="cell" style="left:787.85px;top:216.5px;width:75.375px"><span>$3,667</span></div>
<div class="cell" style="left:863.23px;top:216.5px;width:75.375px"><span>Debit Card</span></div>
<div class="cell" style="left:938.60px;top:216.5px;width:75.375px"><span>Paid</span></div>
<div class="cell" style="left:1013.98px;top:216.5px;width:75.375px"><span>Self-Pay</span></div>
<div class="cell" style="left:1089.35px;top:216.5px;width:75.375px"><span>Jul</span></div>
<div class="cell" style="left:1164.72px;top:216.5px;width:75.375px"><span>2024</span></div>
<div class="rh" style="top:232.5px;height:16px"><span style="top:-0.4px">7</span></div>
<div class="cell" style="left:34.10px;top:232.5px;width:75.375px"><span>VIS-0006</span></div>
<div class="cell" style="left:109.47px;top:232.5px;width:75.375px"><span>Jun 11, 2024</span></div>
<div class="cell" style="left:184.85px;top:232.5px;width:75.375px"><span>Deepa Nair</span></div>
<div class="cell" style="left:260.23px;top:232.5px;width:75.375px"><span>40</span></div>
<div class="cell" style="left:335.60px;top:232.5px;width:75.375px"><span>Male</span></div>
<div class="cell" style="left:410.98px;top:232.5px;width:75.375px"><span>Dermatology</span></div>
<div class="cell" style="left:486.35px;top:232.5px;width:75.375px"><span>Dr. Kapoor</span></div>
<div class="cell" style="left:561.73px;top:232.5px;width:75.375px"><span>Routine Checkup</span></div>
<div class="cell" style="left:637.10px;top:232.5px;width:75.375px"><span>Acne</span></div>
<div class="cell" style="left:712.48px;top:232.5px;width:75.375px"><span>Physical Therapy</span></div>
<div class="cell" style="left:787.85px;top:232.5px;width:75.375px"><span>$2,125</span></div>
<div class="cell" style="left:863.23px;top:232.5px;width:75.375px"><span>UPI</span></div>
<div class="a" style="left:939.00px;top:232.5px;width:75.575px;height:16px;background:#fff2c2"></div>
<div class="cell" style="left:938.60px;top:232.5px;width:75.375px"><span style="color:#d99a2e">Pending</span></div>
<div class="cell" style="left:1013.98px;top:232.5px;width:75.375px"><span>Self-Pay</span></div>
<div class="cell" style="left:1089.35px;top:232.5px;width:75.375px"><span>Jun</span></div>
<div class="cell" style="left:1164.72px;top:232.5px;width:75.375px"><span>2024</span></div>
<div class="a" style="left:34.7px;top:248.5px;width:1237.3000000000002px;height:16px;background:#e8e9eb"></div>
<div class="rh" style="top:248.5px;height:16px"><span style="top:-0.4px">8</span></div>
<div class="cell" style="left:34.10px;top:248.5px;width:75.375px"><span>VIS-0007</span></div>
<div class="cell" style="left:109.47px;top:248.5px;width:75.375px"><span>Jan 15, 2024</span></div>
<div class="cell" style="left:184.85px;top:248.5px;width:75.375px"><span>Priya Singh</span></div>
<div class="cell" style="left:260.23px;top:248.5px;width:75.375px"><span>21</span></div>
<div class="cell" style="left:335.60px;top:248.5px;width:75.375px"><span>Male</span></div>
<div class="cell" style="left:410.98px;top:248.5px;width:75.375px"><span>Pediatrics</span></div>
<div class="cell" style="left:486.35px;top:248.5px;width:75.375px"><span>Dr. Mehta</span></div>
<div class="cell" style="left:561.73px;top:248.5px;width:75.375px"><span>Emergency</span></div>
<div class="cell" style="left:637.10px;top:248.5px;width:75.375px"><span>Ear Infection</span></div>
<div class="cell" style="left:712.48px;top:248.5px;width:75.375px"><span>Medication</span></div>
<div class="cell" style="left:787.85px;top:248.5px;width:75.375px"><span>$3,380</span></div>
<div class="cell" style="left:863.23px;top:248.5px;width:75.375px"><span>Insurance</span></div>
<div class="cell" style="left:938.60px;top:248.5px;width:75.375px"><span>Pending</span></div>
<div class="cell" style="left:1013.98px;top:248.5px;width:75.375px"><span>Star Health</span></div>
<div class="cell" style="left:1089.35px;top:248.5px;width:75.375px"><span>Jan</span></div>
<div class="cell" style="left:1164.72px;top:248.5px;width:75.375px"><span>2024</span></div>
<div class="rh" style="top:264.5px;height:16px"><span style="top:-0.4px">9</span></div>
<div class="cell" style="left:34.10px;top:264.5px;width:75.375px"><span>VIS-0008</span></div>
<div class="cell" style="left:109.47px;top:264.5px;width:75.375px"><span>Aug 17, 2024</span></div>
<div class="cell" style="left:184.85px;top:264.5px;width:75.375px"><span>Pooja Gupta</span></div>
<div class="cell" style="left:260.23px;top:264.5px;width:75.375px"><span>17</span></div>
<div class="cell" style="left:335.60px;top:264.5px;width:75.375px"><span>Male</span></div>
<div class="cell" style="left:410.98px;top:264.5px;width:75.375px"><span>Dermatology</span></div>
<div class="cell" style="left:486.35px;top:264.5px;width:75.375px"><span>Dr. Singh</span></div>
<div class="cell" style="left:561.73px;top:264.5px;width:75.375px"><span>Consultation</span></div>
<div class="cell" style="left:637.10px;top:264.5px;width:75.375px"><span>Acne</span></div>
<div class="cell" style="left:712.48px;top:264.5px;width:75.375px"><span>Minor Procedure</span></div>
<div class="cell" style="left:787.85px;top:264.5px;width:75.375px"><span>$2,217</span></div>
<div class="cell" style="left:863.23px;top:264.5px;width:75.375px"><span>Credit Card</span></div>
<div class="a" style="left:939.00px;top:264.5px;width:75.575px;height:16px;background:#fddbae"></div>
<div class="cell" style="left:938.60px;top:264.5px;width:75.375px"><span style="color:#d8703a">Partially Paid</span></div>
<div class="cell" style="left:1013.98px;top:264.5px;width:75.375px"><span>Self-Pay</span></div>
<div class="cell" style="left:1089.35px;top:264.5px;width:75.375px"><span>Aug</span></div>
<div class="cell" style="left:1164.72px;top:264.5px;width:75.375px"><span>2024</span></div>
<div class="a" style="left:34.7px;top:280.5px;width:1237.3000000000002px;height:16px;background:#e8e9eb"></div>
<div class="rh" style="top:280.5px;height:16px"><span style="top:-0.4px">10</span></div>
<div class="cell" style="left:34.10px;top:280.5px;width:75.375px"><span>VIS-0009</span></div>
<div class="cell" style="left:109.47px;top:280.5px;width:75.375px"><span>May 08, 2024</span></div>
<div class="cell" style="left:184.85px;top:280.5px;width:75.375px"><span>Rajesh Singh</span></div>
<div class="cell" style="left:260.23px;top:280.5px;width:75.375px"><span>32</span></div>
<div class="cell" style="left:335.60px;top:280.5px;width:75.375px"><span>Male</span></div>
<div class="cell" style="left:410.98px;top:280.5px;width:75.375px"><span>Neurology</span></div>
<div class="cell" style="left:486.35px;top:280.5px;width:75.375px"><span>Dr. Joshi</span></div>
<div class="cell" style="left:561.73px;top:280.5px;width:75.375px"><span>Procedure</span></div>
<div class="cell" style="left:637.10px;top:280.5px;width:75.375px"><span>Migraine</span></div>
<div class="cell" style="left:712.48px;top:280.5px;width:75.375px"><span>Physical Therapy</span></div>
<div class="cell" style="left:787.85px;top:280.5px;width:75.375px"><span>$13,572</span></div>
<div class="cell" style="left:863.23px;top:280.5px;width:75.375px"><span>Credit Card</span></div>
<div class="cell" style="left:938.60px;top:280.5px;width:75.375px"><span>Partially Paid</span></div>
<div class="cell" style="left:1013.98px;top:280.5px;width:75.375px"><span>New India</span></div>
<div class="cell" style="left:1089.35px;top:280.5px;width:75.375px"><span>May</span></div>
<div class="cell" style="left:1164.72px;top:280.5px;width:75.375px"><span>2024</span></div>
<div class="rh" style="top:296.5px;height:16px"><span style="top:-0.4px">11</span></div>
<div class="cell" style="left:34.10px;top:296.5px;width:75.375px"><span>VIS-0010</span></div>
<div class="cell" style="left:109.47px;top:296.5px;width:75.375px"><span>Apr 27, 2024</span></div>
<div class="cell" style="left:184.85px;top:296.5px;width:75.375px"><span>Divya Joshi</span></div>
<div class="cell" style="left:260.23px;top:296.5px;width:75.375px"><span>14</span></div>
<div class="cell" style="left:335.60px;top:296.5px;width:75.375px"><span>Male</span></div>
<div class="cell" style="left:410.98px;top:296.5px;width:75.375px"><span>General Medicine</span></div>
<div class="cell" style="left:486.35px;top:296.5px;width:75.375px"><span>Dr. Verma</span></div>
<div class="cell" style="left:561.73px;top:296.5px;width:75.375px"><span>Routine Checkup</span></div>
<div class="cell" style="left:637.10px;top:296.5px;width:75.375px"><span>Fever</span></div>
<div class="cell" style="left:712.48px;top:296.5px;width:75.375px"><span>Lab Work</span></div>
<div class="cell" style="left:787.85px;top:296.5px;width:75.375px"><span>$1,213</span></div>
<div class="cell" style="left:863.23px;top:296.5px;width:75.375px"><span>Credit Card</span></div>
<div class="a" style="left:939.00px;top:296.5px;width:75.575px;height:16px;background:#cbe8ce"></div>
<div class="cell" style="left:938.60px;top:296.5px;width:75.375px"><span style="color:#2e7f3f">Paid</span></div>
<div class="cell" style="left:1013.98px;top:296.5px;width:75.375px"><span>Self-Pay</span></div>
<div class="cell" style="left:1089.35px;top:296.5px;width:75.375px"><span>Apr</span></div>
<div class="cell" style="left:1164.72px;top:296.5px;width:75.375px"><span>2024</span></div>
<div class="a" style="left:34.7px;top:312.5px;width:1237.3000000000002px;height:16px;background:#e8e9eb"></div>
<div class="rh" style="top:312.5px;height:16px"><span style="top:-0.4px">12</span></div>
<div class="cell" style="left:34.10px;top:312.5px;width:75.375px"><span>VIS-0011</span></div>
<div class="cell" style="left:109.47px;top:312.5px;width:75.375px"><span>Apr 16, 2024</span></div>
<div class="cell" style="left:184.85px;top:312.5px;width:75.375px"><span>Rahul Kapoor</span></div>
<div class="cell" style="left:260.23px;top:312.5px;width:75.375px"><span>59</span></div>
<div class="cell" style="left:335.60px;top:312.5px;width:75.375px"><span>Female</span></div>
<div class="cell" style="left:410.98px;top:312.5px;width:75.375px"><span>Cardiology</span></div>
<div class="cell" style="left:486.35px;top:312.5px;width:75.375px"><span>Dr. Kumar</span></div>
<div class="cell" style="left:561.73px;top:312.5px;width:75.375px"><span>Lab Test</span></div>
<div class="cell" style="left:637.10px;top:312.5px;width:75.375px"><span>Heart Failure</span></div>
<div class="cell" style="left:712.48px;top:312.5px;width:75.375px"><span>Physical Therapy</span></div>
<div class="cell" style="left:787.85px;top:312.5px;width:75.375px"><span>$2,514</span></div>
<div class="cell" style="left:863.23px;top:312.5px;width:75.375px"><span>Debit Card</span></div>
<div class="cell" style="left:938.60px;top:312.5px;width:75.375px"><span>Insurance Claimed</span></div>
<div class="cell" style="left:1013.98px;top:312.5px;width:75.375px"><span>Self-Pay</span></div>
<div class="cell" style="left:1089.35px;top:312.5px;width:75.375px"><span>Apr</span></div>
<div class="cell" style="left:1164.72px;top:312.5px;width:75.375px"><span>2024</span></div>
<div class="rh" style="top:328.5px;height:16px"><span style="top:-0.4px">13</span></div>
<div class="cell" style="left:34.10px;top:328.5px;width:75.375px"><span>VIS-0012</span></div>
<div class="cell" style="left:109.47px;top:328.5px;width:75.375px"><span>Apr 23, 2024</span></div>
<div class="cell" style="left:184.85px;top:328.5px;width:75.375px"><span>Rajesh Nair</span></div>
<div class="cell" style="left:260.23px;top:328.5px;width:75.375px"><span>25</span></div>
<div class="cell" style="left:335.60px;top:328.5px;width:75.375px"><span>Male</span></div>
<div class="cell" style="left:410.98px;top:328.5px;width:75.375px"><span>Cardiology</span></div>
<div class="cell" style="left:486.35px;top:328.5px;width:75.375px"><span>Dr. Singh</span></div>
<div class="cell" style="left:561.73px;top:328.5px;width:75.375px"><span>Routine Checkup</span></div>
<div class="cell" style="left:637.10px;top:328.5px;width:75.375px"><span>Arrhythmia</span></div>
<div class="cell" style="left:712.48px;top:328.5px;width:75.375px"><span>Vaccination</span></div>
<div class="cell" style="left:787.85px;top:328.5px;width:75.375px"><span>$800</span></div>
<div class="cell" style="left:863.23px;top:328.5px;width:75.375px"><span>Online Transfer</span></div>
<div class="a" style="left:939.00px;top:328.5px;width:75.575px;height:16px;background:#fddbae"></div>
<div class="cell" style="left:938.60px;top:328.5px;width:75.375px"><span style="color:#d8703a">Partially Paid</span></div>
<div class="cell" style="left:1013.98px;top:328.5px;width:75.375px"><span>Self-Pay</span></div>
<div class="cell" style="left:1089.35px;top:328.5px;width:75.375px"><span>Apr</span></div>
<div class="cell" style="left:1164.72px;top:328.5px;width:75.375px"><span>2024</span></div>
<div class="a" style="left:34.7px;top:344.5px;width:1237.3000000000002px;height:16px;background:#e8e9eb"></div>
<div class="rh" style="top:344.5px;height:16px"><span style="top:-0.4px">14</span></div>
<div class="cell" style="left:34.10px;top:344.5px;width:75.375px"><span>VIS-0013</span></div>
<div class="cell" style="left:109.47px;top:344.5px;width:75.375px"><span>Apr 03, 2024</span></div>
<div class="cell" style="left:184.85px;top:344.5px;width:75.375px"><span>Meera Nair</span></div>
<div class="cell" style="left:260.23px;top:344.5px;width:75.375px"><span>32</span></div>
<div class="cell" style="left:335.60px;top:344.5px;width:75.375px"><span>Female</span></div>
<div class="cell" style="left:410.98px;top:344.5px;width:75.375px"><span>Cardiology</span></div>
<div class="cell" style="left:486.35px;top:344.5px;width:75.375px"><span>Dr. Patel</span></div>
<div class="cell" style="left:561.73px;top:344.5px;width:75.375px"><span>Consultation</span></div>
<div class="cell" style="left:637.10px;top:344.5px;width:75.375px"><span>Palpitations</span></div>
<div class="cell" style="left:712.48px;top:344.5px;width:75.375px"><span>Imaging</span></div>
<div class="cell" style="left:787.85px;top:344.5px;width:75.375px"><span>$1,893</span></div>
<div class="cell" style="left:863.23px;top:344.5px;width:75.375px"><span>Insurance</span></div>
<div class="cell" style="left:938.60px;top:344.5px;width:75.375px"><span>Insurance Claimed</span></div>
<div class="cell" style="left:1013.98px;top:344.5px;width:75.375px"><span>Bajaj Allianz</span></div>
<div class="cell" style="left:1089.35px;top:344.5px;width:75.375px"><span>Apr</span></div>
<div class="cell" style="left:1164.72px;top:344.5px;width:75.375px"><span>2024</span></div>
<div class="rh" style="top:360.5px;height:16px"><span style="top:-0.4px">15</span></div>
<div class="cell" style="left:34.10px;top:360.5px;width:75.375px"><span>VIS-0014</span></div>
<div class="cell" style="left:109.47px;top:360.5px;width:75.375px"><span>May 19, 2024</span></div>
<div class="cell" style="left:184.85px;top:360.5px;width:75.375px"><span>Vikram Rao</span></div>
<div class="cell" style="left:260.23px;top:360.5px;width:75.375px"><span>59</span></div>
<div class="cell" style="left:335.60px;top:360.5px;width:75.375px"><span>Female</span></div>
<div class="cell" style="left:410.98px;top:360.5px;width:75.375px"><span>Pediatrics</span></div>
<div class="cell" style="left:486.35px;top:360.5px;width:75.375px"><span>Dr. Kapoor</span></div>
<div class="cell" style="left:561.73px;top:360.5px;width:75.375px"><span>Consultation</span></div>
<div class="cell" style="left:637.10px;top:360.5px;width:75.375px"><span>Asthma</span></div>
<div class="cell" style="left:712.48px;top:360.5px;width:75.375px"><span>Imaging</span></div>
<div class="cell" style="left:787.85px;top:360.5px;width:75.375px"><span>$2,268</span></div>
<div class="cell" style="left:863.23px;top:360.5px;width:75.375px"><span>Credit Card</span></div>
<div class="a" style="left:939.00px;top:360.5px;width:75.575px;height:16px;background:#c8e0f7"></div>
<div class="cell" style="left:938.60px;top:360.5px;width:75.375px"><span style="color:#2a65b0">Insurance Claimed</span></div>
<div class="cell" style="left:1013.98px;top:360.5px;width:75.375px"><span>Self-Pay</span></div>
<div class="cell" style="left:1089.35px;top:360.5px;width:75.375px"><span>May</span></div>
<div class="cell" style="left:1164.72px;top:360.5px;width:75.375px"><span>2024</span></div>
<div class="a" style="left:34.7px;top:376.5px;width:1237.3000000000002px;height:16px;background:#e8e9eb"></div>
<div class="rh" style="top:376.5px;height:16px"><span style="top:-0.4px">16</span></div>
<div class="cell" style="left:34.10px;top:376.5px;width:75.375px"><span>VIS-0015</span></div>
<div class="cell" style="left:109.47px;top:376.5px;width:75.375px"><span>Jan 10, 2024</span></div>
<div class="cell" style="left:184.85px;top:376.5px;width:75.375px"><span>Sneha Verma</span></div>
<div class="cell" style="left:260.23px;top:376.5px;width:75.375px"><span>74</span></div>
<div class="cell" style="left:335.60px;top:376.5px;width:75.375px"><span>Female</span></div>
<div class="cell" style="left:410.98px;top:376.5px;width:75.375px"><span>Orthopedics</span></div>
<div class="cell" style="left:486.35px;top:376.5px;width:75.375px"><span>Dr. Reddy</span></div>
<div class="cell" style="left:561.73px;top:376.5px;width:75.375px"><span>Routine Checkup</span></div>
<div class="cell" style="left:637.10px;top:376.5px;width:75.375px"><span>Fracture</span></div>
<div class="cell" style="left:712.48px;top:376.5px;width:75.375px"><span>Vaccination</span></div>
<div class="cell" style="left:787.85px;top:376.5px;width:75.375px"><span>$2,083</span></div>
<div class="cell" style="left:863.23px;top:376.5px;width:75.375px"><span>Debit Card</span></div>
<div class="cell" style="left:938.60px;top:376.5px;width:75.375px"><span>Partially Paid</span></div>
<div class="cell" style="left:1013.98px;top:376.5px;width:75.375px"><span>Max Bupa</span></div>
<div class="cell" style="left:1089.35px;top:376.5px;width:75.375px"><span>Jan</span></div>
<div class="cell" style="left:1164.72px;top:376.5px;width:75.375px"><span>2024</span></div>
<div class="rh" style="top:392.5px;height:16px"><span style="top:-0.4px">17</span></div>
<div class="cell" style="left:34.10px;top:392.5px;width:75.375px"><span>VIS-0016</span></div>
<div class="cell" style="left:109.47px;top:392.5px;width:75.375px"><span>Apr 12, 2024</span></div>
<div class="cell" style="left:184.85px;top:392.5px;width:75.375px"><span>Vikram Singh</span></div>
<div class="cell" style="left:260.23px;top:392.5px;width:75.375px"><span>18</span></div>
<div class="cell" style="left:335.60px;top:392.5px;width:75.375px"><span>Female</span></div>
<div class="cell" style="left:410.98px;top:392.5px;width:75.375px"><span>Dermatology</span></div>
<div class="cell" style="left:486.35px;top:392.5px;width:75.375px"><span>Dr. Joshi</span></div>
<div class="cell" style="left:561.73px;top:392.5px;width:75.375px"><span>Lab Test</span></div>
<div class="cell" style="left:637.10px;top:392.5px;width:75.375px"><span>Fungal Infection</span></div>
<div class="cell" style="left:712.48px;top:392.5px;width:75.375px"><span>Medication</span></div>
<div class="cell" style="left:787.85px;top:392.5px;width:75.375px"><span>$1,925</span></div>
<div class="cell" style="left:863.23px;top:392.5px;width:75.375px"><span>Debit Card</span></div>
<div class="a" style="left:939.00px;top:392.5px;width:75.575px;height:16px;background:#c8e0f7"></div>
<div class="cell" style="left:938.60px;top:392.5px;width:75.375px"><span style="color:#2a65b0">Insurance Claimed</span></div>
<div class="cell" style="left:1013.98px;top:392.5px;width:75.375px"><span>Self-Pay</span></div>
<div class="cell" style="left:1089.35px;top:392.5px;width:75.375px"><span>Apr</span></div>
<div class="cell" style="left:1164.72px;top:392.5px;width:75.375px"><span>2024</span></div>
<div class="a" style="left:34.7px;top:408.5px;width:1237.3000000000002px;height:16px;background:#e8e9eb"></div>
<div class="rh" style="top:408.5px;height:16px"><span style="top:-0.4px">18</span></div>
<div class="cell" style="left:34.10px;top:408.5px;width:75.375px"><span>VIS-0017</span></div>
<div class="cell" style="left:109.47px;top:408.5px;width:75.375px"><span>Mar 02, 2024</span></div>
<div class="cell" style="left:184.85px;top:408.5px;width:75.375px"><span>Kavita Gupta</span></div>
<div class="cell" style="left:260.23px;top:408.5px;width:75.375px"><span>47</span></div>
<div class="cell" style="left:335.60px;top:408.5px;width:75.375px"><span>Male</span></div>
<div class="cell" style="left:410.98px;top:408.5px;width:75.375px"><span>Dermatology</span></div>
<div class="cell" style="left:486.35px;top:408.5px;width:75.375px"><span>Dr. Kapoor</span></div>
<div class="cell" style="left:561.73px;top:408.5px;width:75.375px"><span>Lab Test</span></div>
<div class="cell" style="left:637.10px;top:408.5px;width:75.375px"><span>Skin Allergy</span></div>
<div class="cell" style="left:712.48px;top:408.5px;width:75.375px"><span>Minor Procedure</span></div>
<div class="cell" style="left:787.85px;top:408.5px;width:75.375px"><span>$1,717</span></div>
<div class="cell" style="left:863.23px;top:408.5px;width:75.375px"><span>Debit Card</span></div>
<div class="cell" style="left:938.60px;top:408.5px;width:75.375px"><span>Partially Paid</span></div>
<div class="cell" style="left:1013.98px;top:408.5px;width:75.375px"><span>Self-Pay</span></div>
<div class="cell" style="left:1089.35px;top:408.5px;width:75.375px"><span>Mar</span></div>
<div class="cell" style="left:1164.72px;top:408.5px;width:75.375px"><span>2024</span></div>
<div class="rh" style="top:424.5px;height:16px"><span style="top:-0.4px">19</span></div>
<div class="cell" style="left:34.10px;top:424.5px;width:75.375px"><span>VIS-0018</span></div>
<div class="cell" style="left:109.47px;top:424.5px;width:75.375px"><span>Feb 06, 2024</span></div>
<div class="cell" style="left:184.85px;top:424.5px;width:75.375px"><span>Priya Gupta</span></div>
<div class="cell" style="left:260.23px;top:424.5px;width:75.375px"><span>72</span></div>
<div class="cell" style="left:335.60px;top:424.5px;width:75.375px"><span>Male</span></div>
<div class="cell" style="left:410.98px;top:424.5px;width:75.375px"><span>Cardiology</span></div>
<div class="cell" style="left:486.35px;top:424.5px;width:75.375px"><span>Dr. Mehta</span></div>
<div class="cell" style="left:561.73px;top:424.5px;width:75.375px"><span>Emergency</span></div>
<div class="cell" style="left:637.10px;top:424.5px;width:75.375px"><span style="left:calc(50% - 2px)">Cholesterol Management</span></div>
<div class="cell" style="left:712.48px;top:424.5px;width:75.375px"><span>Vaccination</span></div>
<div class="cell" style="left:787.85px;top:424.5px;width:75.375px"><span>$6,163</span></div>
<div class="cell" style="left:863.23px;top:424.5px;width:75.375px"><span>Debit Card</span></div>
<div class="a" style="left:939.00px;top:424.5px;width:75.575px;height:16px;background:#c8e0f7"></div>
<div class="cell" style="left:938.60px;top:424.5px;width:75.375px"><span style="color:#2a65b0">Insurance Claimed</span></div>
<div class="cell" style="left:1013.98px;top:424.5px;width:75.375px"><span>Care Health</span></div>
<div class="cell" style="left:1089.35px;top:424.5px;width:75.375px"><span>Feb</span></div>
<div class="cell" style="left:1164.72px;top:424.5px;width:75.375px"><span>2024</span></div>
<div class="a" style="left:34.7px;top:440.5px;width:1237.3000000000002px;height:16px;background:#e8e9eb"></div>
<div class="rh" style="top:440.5px;height:16px"><span style="top:-0.4px">20</span></div>
<div class="cell" style="left:34.10px;top:440.5px;width:75.375px"><span>VIS-0019</span></div>
<div class="cell" style="left:109.47px;top:440.5px;width:75.375px"><span>Jun 02, 2024</span></div>
<div class="cell" style="left:184.85px;top:440.5px;width:75.375px"><span>Vikram Reddy</span></div>
<div class="cell" style="left:260.23px;top:440.5px;width:75.375px"><span>55</span></div>
<div class="cell" style="left:335.60px;top:440.5px;width:75.375px"><span>Female</span></div>
<div class="cell" style="left:410.98px;top:440.5px;width:75.375px"><span>Dermatology</span></div>
<div class="cell" style="left:486.35px;top:440.5px;width:75.375px"><span>Dr. Mehta</span></div>
<div class="cell" style="left:561.73px;top:440.5px;width:75.375px"><span>Follow-up</span></div>
<div class="cell" style="left:637.10px;top:440.5px;width:75.375px"><span>Fungal Infection</span></div>
<div class="cell" style="left:712.48px;top:440.5px;width:75.375px"><span>Imaging</span></div>
<div class="cell" style="left:787.85px;top:440.5px;width:75.375px"><span>$603</span></div>
<div class="cell" style="left:863.23px;top:440.5px;width:75.375px"><span>Cash</span></div>
<div class="cell" style="left:938.60px;top:440.5px;width:75.375px"><span>Pending</span></div>
<div class="cell" style="left:1013.98px;top:440.5px;width:75.375px"><span>Self-Pay</span></div>
<div class="cell" style="left:1089.35px;top:440.5px;width:75.375px"><span>Jun</span></div>
<div class="cell" style="left:1164.72px;top:440.5px;width:75.375px"><span>2024</span></div>
<div class="rh" style="top:456.5px;height:16px"><span style="top:-0.4px">21</span></div>
<div class="cell" style="left:34.10px;top:456.5px;width:75.375px"><span>VIS-0020</span></div>
<div class="cell" style="left:109.47px;top:456.5px;width:75.375px"><span>Jul 02, 2024</span></div>
<div class="cell" style="left:184.85px;top:456.5px;width:75.375px"><span>Meera Mehta</span></div>
<div class="cell" style="left:260.23px;top:456.5px;width:75.375px"><span>69</span></div>
<div class="cell" style="left:335.60px;top:456.5px;width:75.375px"><span>Male</span></div>
<div class="cell" style="left:410.98px;top:456.5px;width:75.375px"><span>Dermatology</span></div>
<div class="cell" style="left:486.35px;top:456.5px;width:75.375px"><span>Dr. Patel</span></div>
<div class="cell" style="left:561.73px;top:456.5px;width:75.375px"><span>Routine Checkup</span></div>
<div class="cell" style="left:637.10px;top:456.5px;width:75.375px"><span>Skin Allergy</span></div>
<div class="cell" style="left:712.48px;top:456.5px;width:75.375px"><span>Imaging</span></div>
<div class="cell" style="left:787.85px;top:456.5px;width:75.375px"><span>$777</span></div>
<div class="cell" style="left:863.23px;top:456.5px;width:75.375px"><span>UPI</span></div>
<div class="a" style="left:939.00px;top:456.5px;width:75.575px;height:16px;background:#cbe8ce"></div>
<div class="cell" style="left:938.60px;top:456.5px;width:75.375px"><span style="color:#2e7f3f">Paid</span></div>
<div class="cell" style="left:1013.98px;top:456.5px;width:75.375px"><span>Self-Pay</span></div>
<div class="cell" style="left:1089.35px;top:456.5px;width:75.375px"><span>Jul</span></div>
<div class="cell" style="left:1164.72px;top:456.5px;width:75.375px"><span>2024</span></div>
<div class="a" style="left:34.7px;top:472.5px;width:1237.3000000000002px;height:16px;background:#e8e9eb"></div>
<div class="rh" style="top:472.5px;height:16px"><span style="top:-0.4px">22</span></div>
<div class="cell" style="left:34.10px;top:472.5px;width:75.375px"><span>VIS-0021</span></div>
<div class="cell" style="left:109.47px;top:472.5px;width:75.375px"><span>Oct 03, 2024</span></div>
<div class="cell" style="left:184.85px;top:472.5px;width:75.375px"><span>Sunita Reddy</span></div>
<div class="cell" style="left:260.23px;top:472.5px;width:75.375px"><span>63</span></div>
<div class="cell" style="left:335.60px;top:472.5px;width:75.375px"><span>Female</span></div>
<div class="cell" style="left:410.98px;top:472.5px;width:75.375px"><span>Dermatology</span></div>
<div class="cell" style="left:486.35px;top:472.5px;width:75.375px"><span>Dr. Kumar</span></div>
<div class="cell" style="left:561.73px;top:472.5px;width:75.375px"><span>Procedure</span></div>
<div class="cell" style="left:637.10px;top:472.5px;width:75.375px"><span>Skin Allergy</span></div>
<div class="cell" style="left:712.48px;top:472.5px;width:75.375px"><span>Surgery</span></div>
<div class="cell" style="left:787.85px;top:472.5px;width:75.375px"><span>$6,346</span></div>
<div class="cell" style="left:863.23px;top:472.5px;width:75.375px"><span>Cash</span></div>
<div class="cell" style="left:938.60px;top:472.5px;width:75.375px"><span>Insurance Claimed</span></div>
<div class="cell" style="left:1013.98px;top:472.5px;width:75.375px"><span>HDFC Ergo</span></div>
<div class="cell" style="left:1089.35px;top:472.5px;width:75.375px"><span>Oct</span></div>
<div class="cell" style="left:1164.72px;top:472.5px;width:75.375px"><span>2024</span></div>
<div class="rh" style="top:488.5px;height:16px"><span style="top:-0.4px">23</span></div>
<div class="cell" style="left:34.10px;top:488.5px;width:75.375px"><span>VIS-0022</span></div>
<div class="cell" style="left:109.47px;top:488.5px;width:75.375px"><span>Sep 19, 2024</span></div>
<div class="cell" style="left:184.85px;top:488.5px;width:75.375px"><span>Sneha Reddy</span></div>
<div class="cell" style="left:260.23px;top:488.5px;width:75.375px"><span>30</span></div>
<div class="cell" style="left:335.60px;top:488.5px;width:75.375px"><span>Female</span></div>
<div class="cell" style="left:410.98px;top:488.5px;width:75.375px"><span>Orthopedics</span></div>
<div class="cell" style="left:486.35px;top:488.5px;width:75.375px"><span>Dr. Joshi</span></div>
<div class="cell" style="left:561.73px;top:488.5px;width:75.375px"><span>Consultation</span></div>
<div class="cell" style="left:637.10px;top:488.5px;width:75.375px"><span>Sports Injury</span></div>
<div class="cell" style="left:712.48px;top:488.5px;width:75.375px"><span>Medication</span></div>
<div class="cell" style="left:787.85px;top:488.5px;width:75.375px"><span>$2,028</span></div>
<div class="cell" style="left:863.23px;top:488.5px;width:75.375px"><span>Insurance</span></div>
<div class="a" style="left:939.00px;top:488.5px;width:75.575px;height:16px;background:#cbe8ce"></div>
<div class="cell" style="left:938.60px;top:488.5px;width:75.375px"><span style="color:#2e7f3f">Paid</span></div>
<div class="cell" style="left:1013.98px;top:488.5px;width:75.375px"><span>Bajaj Allianz</span></div>
<div class="cell" style="left:1089.35px;top:488.5px;width:75.375px"><span>Sep</span></div>
<div class="cell" style="left:1164.72px;top:488.5px;width:75.375px"><span>2024</span></div>
<div class="a" style="left:34.7px;top:504.5px;width:1237.3000000000002px;height:16px;background:#e8e9eb"></div>
<div class="rh" style="top:504.5px;height:16px"><span style="top:-1.4px">24</span></div>
<div class="cell" style="left:34.10px;top:503.3px;width:75.375px"><span>VIS-0023</span></div>
<div class="cell" style="left:109.47px;top:503.3px;width:75.375px"><span>Apr 27, 2024</span></div>
<div class="cell" style="left:184.85px;top:503.3px;width:75.375px"><span>Rahul Mehta</span></div>
<div class="cell" style="left:260.23px;top:503.3px;width:75.375px"><span>57</span></div>
<div class="cell" style="left:335.60px;top:503.3px;width:75.375px"><span>Female</span></div>
<div class="cell" style="left:410.98px;top:503.3px;width:75.375px"><span>Dermatology</span></div>
<div class="cell" style="left:486.35px;top:503.3px;width:75.375px"><span>Dr. Kumar</span></div>
<div class="cell" style="left:561.73px;top:503.3px;width:75.375px"><span>Routine Checkup</span></div>
<div class="cell" style="left:637.10px;top:503.3px;width:75.375px"><span>Acne</span></div>
<div class="cell" style="left:712.48px;top:503.3px;width:75.375px"><span>Surgery</span></div>
<div class="cell" style="left:787.85px;top:503.3px;width:75.375px"><span>$3,384</span></div>
<div class="cell" style="left:863.23px;top:503.3px;width:75.375px"><span>Cash</span></div>
<div class="cell" style="left:938.60px;top:503.3px;width:75.375px"><span>Paid</span></div>
<div class="cell" style="left:1013.98px;top:503.3px;width:75.375px"><span>Self-Pay</span></div>
<div class="cell" style="left:1089.35px;top:503.3px;width:75.375px"><span>Apr</span></div>
<div class="cell" style="left:1164.72px;top:503.3px;width:75.375px"><span>2024</span></div>
<div class="a" style="left:788px;top:375.6px;width:76px;height:16.4px;border:1.5px solid #2a62c6"></div>
<div class="a" style="left:860.5px;top:389px;width:5.8px;height:5.8px;border-radius:3px;background:#0b57d0"></div>
</div></div>
<div class="a" style="left:1272px;top:107px;width:8px;height:403px;background:#fff;border-left:1px solid #dadce0"></div>
<div class="a" style="left:1272px;top:149.5px;width:8px;height:3px;background:#e3e5e8"></div>
<div class="a" style="left:1274px;top:154px;width:5px;height:18.5px;border-radius:3px;background:#dadce0"></div>
</body></html>
